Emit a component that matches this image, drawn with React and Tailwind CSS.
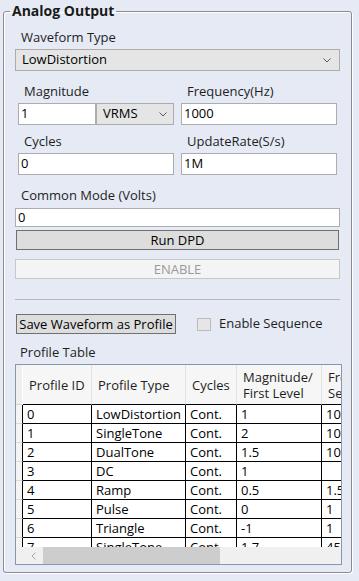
import React from 'react'

// ─── data ─────────────────────────────────────────────────────────────────
const rows = [
  ['0', 'LowDistortion', 'Cont.', '1', '1000'],
  ['1', 'SingleTone', 'Cont.', '2', '1000'],
  ['2', 'DualTone', 'Cont.', '1.5', '1000'],
  ['3', 'DC', 'Cont.', '1', ''],
  ['4', 'Ramp', 'Cont.', '0.5', '1.5'],
  ['5', 'Pulse', 'Cont.', '0', '1'],
  ['6', 'Triangle', 'Cont.', '-1', '1'],
  ['7', 'SingleTone', 'Cont.', '1.7', '45000'],
]

const cols = ['w-[69px]', 'w-[94px]', 'w-[51px]', 'w-[85px]', 'w-[90px]']

function Chevron() {
  return (
    <svg width="8" height="5" viewBox="0 0 8 5" className="shrink-0">
      <path d="M0.5 0.5 L4 4 L7.5 0.5" fill="none" stroke="#5a5a5a" strokeWidth="1" />
    </svg>
  )
}

function TextBox({ value, className }) {
  return (
    <div className={`flex items-center border border-[#abadb3] bg-white pl-[2px] text-[13px] text-black ${className}`}>
      {value}
    </div>
  )
}

function Label({ children, className }) {
  return <div className={`h-[16px] leading-[16px] text-[13px] text-[#1e1e1e] ${className}`}>{children}</div>
}

export default function App() {
  return (
    <div className="w-[359px] h-[581px] overflow-hidden bg-[#e5eaf5] pt-[1px] pl-[3px] font-['Open_Sans',sans-serif]">
      <fieldset className="w-[349px] rounded-[3px] border border-[#8c8c8c] shadow-[1px_1px_0_#ffffff,inset_1px_1px_0_#ffffff] pb-[7px]">
        <legend className="ml-[6px] px-[2px] text-[14px] font-bold leading-[20px] text-[#1a1a1a]">Analog Output</legend>

        <div className="pl-[11px] flex flex-col">
          {/* Waveform type */}
          <Label className="mt-[8px] pl-[6px]">Waveform Type</Label>
          <div className="mt-[4px] h-[22px] w-[325px] flex items-center justify-between border border-[#acacac] bg-[#e5e5e5] pl-[6px] pr-[8px] text-[13px] text-black">
            LowDistortion
            <Chevron />
          </div>

          {/* Magnitude / Frequency */}
          <div className="mt-[12px] flex">
            <Label className="w-[166px] pl-[9px]">Magnitude</Label>
            <Label className="pl-[6px]">Frequency(Hz)</Label>
          </div>
          <div className="mt-[4px] flex h-[22px] pl-[3px]">
            <TextBox value="1" className="w-[78px] h-full" />
            <div className="w-[78px] h-full flex items-center justify-between border border-[#acacac] bg-[#e5e5e5] pl-[6px] pr-[6px] text-[13px] text-black">
              VRMS
              <Chevron />
            </div>
            <TextBox value="1000" className="ml-[7px] w-[156px] h-full" />
          </div>

          {/* Cycles / UpdateRate */}
          <div className="mt-[8px] flex">
            <Label className="w-[166px] pl-[9px]">Cycles</Label>
            <Label className="pl-[6px]">UpdateRate(S/s)</Label>
          </div>
          <div className="mt-[4px] flex h-[22px] pl-[3px] gap-[7px]">
            <TextBox value="0" className="w-[156px] h-full" />
            <TextBox value="1M" className="w-[156px] h-full" />
          </div>

          {/* Common mode */}
          <Label className="mt-[12px] pl-[6px]">Common Mode (Volts)</Label>
          <TextBox value="0" className="mt-[5px] w-[325px] h-[19px]" />

          <button className="mt-[3px] ml-[1px] w-[323px] h-[20px] border border-[#707070] bg-[#dddddd] text-[13px] leading-none text-black">
            Run DPD
          </button>
          <button className="mt-[9px] w-[325px] h-[20px] border border-[#c6c9cc] bg-[#f4f4f4] text-[13px] leading-none text-[#9a9a9a]">
            ENABLE
          </button>

          <div className="mt-[20px] w-[325px] h-[1px] bg-[#b4b8bf]" />

          {/* Save / sequence */}
          <div className="mt-[14px] flex items-center h-[20px]">
            <button className="ml-[1px] w-[160px] h-[20px] border border-[#707070] bg-[#dddddd] text-[13px] leading-none text-black">
              Save Waveform as Profile
            </button>
            <div className="ml-[21px] w-[14px] h-[13px] border border-[#bcbcbc] bg-[#e6e6e6]" />
            <span className="ml-[8px] text-[13px] text-[#1e1e1e]">Enable Sequence</span>
          </div>

          <Label className="mt-[10px] pl-[5px]">Profile Table</Label>

          {/* Profile table */}
          <div className="mt-[4px] w-[327px] h-[201px] border border-[#8797ad] bg-white flex flex-col overflow-hidden">
            <div className="flex-1 min-h-0 overflow-hidden">
              <div className="flex h-[40px] w-max text-[13px] text-[#1e1e1e]">
                <div className="w-[7px] h-full bg-[#efefef] border-r border-white border-b border-b-[#d5d5d5]" />
                {['Profile ID', 'Profile Type', 'Cycles', 'Magnitude/\nFirst Level', 'Frequency/\nSecond Level'].map((h, i) => (
                  <div
                    key={i}
                    className={`${cols[i]} h-full flex items-center pl-[6px] bg-[#f6f6f6] border-r border-r-[#e2e2e2] border-b border-b-black whitespace-pre leading-[16px] overflow-hidden`}
                  >
                    {h}
                  </div>
                ))}
              </div>
              {rows.map((r, ri) => (
                <div key={ri} className="flex h-[19px] w-max text-[13px] text-black">
                  <div className="w-[7px] h-full bg-[#f4f4f4] border-r border-r-black border-b border-b-[#d8d8d8]" />
                  {r.map((c, ci) => (
                    <div
                      key={ci}
                      className={`${cols[ci]} h-full flex items-center pl-[4px] border-r border-b border-black whitespace-nowrap overflow-hidden leading-none`}
                    >
                      {c}
                    </div>
                  ))}
                </div>
              ))}
            </div>

            {/* horizontal scrollbar */}
            <div className="h-[17px] shrink-0 flex bg-[#f0f0f0]">
              <div className="w-[7px]" />
              <div className="w-[20px] flex items-center justify-center">
                <svg width="5" height="8" viewBox="0 0 5 8">
                  <path d="M4.5 0.5 L1 4 L4.5 7.5" fill="none" stroke="#a6a6a6" strokeWidth="1" />
                </svg>
              </div>
              <div className="w-[177px] bg-[#cdcdcd]" />
              <div className="flex-1" />
            </div>
          </div>
        </div>
      </fieldset>
    </div>
  )
}
